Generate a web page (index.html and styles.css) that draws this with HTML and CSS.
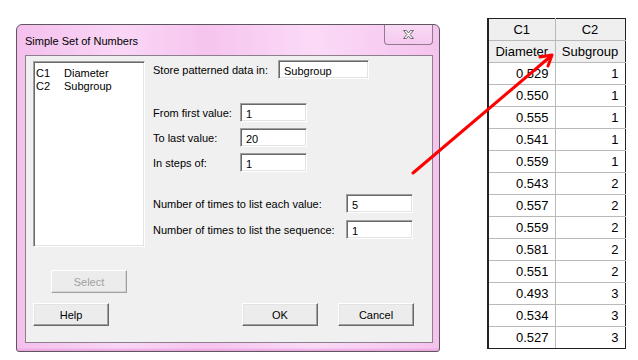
FILE: index.html
```html
<!DOCTYPE html>
<html lang="en">

<head>
    <meta charset="UTF-8">
    <meta name="viewport" content="width=device-width, initial-scale=1.0">
    <title>Simple Set of Numbers</title>
    <link rel="stylesheet" href="styles.css">
</head>

<body>
    <div class="page">
        <div class="dialog">
            <div class="titlebar">
                <span class="title">Simple Set of Numbers</span>
                <div class="close">
                    <svg width="13" height="11" viewBox="0 0 13 11">
                        <path d="M1.5 1.5h3l2 2.5 2-2.5h3l-3.4 4 3.4 4h-3l-2-2.5-2 2.5h-3l3.4-4z"
                            fill="#f4f4f4" stroke="#6d6d6d" stroke-width="1" stroke-linejoin="round" />
                    </svg>
                </div>
            </div>

            <div class="client">
                <div class="top">
                    <div class="listbox">
                        <div class="item"><span class="colname">C1</span>Diameter</div>
                        <div class="item"><span class="colname">C2</span>Subgroup</div>
                    </div>

                    <div class="fields">
                        <div class="row first">
                            <label class="lbl lbl-store" for="store">Store patterned data in:</label>
                            <input class="box box-wide" type="text" id="store" value="Subgroup">
                        </div>
                        <div class="row gap-big">
                            <label class="lbl lbl-short" for="from">From first value:</label>
                            <input class="box" type="text" id="from" value="1">
                        </div>
                        <div class="row gap-small">
                            <label class="lbl lbl-short" for="to">To last value:</label>
                            <input class="box" type="text" id="to" value="20">
                        </div>
                        <div class="row gap-small">
                            <label class="lbl lbl-short" for="steps">In steps of:</label>
                            <input class="box" type="text" id="steps" value="1">
                        </div>
                        <div class="row gap-mid">
                            <label class="lbl lbl-long" for="each">Number of times to list each value:</label>
                            <input class="box" type="text" id="each" value="5">
                        </div>
                        <div class="row gap-seq">
                            <label class="lbl lbl-long" for="seq">Number of times to list the sequence:</label>
                            <input class="box" type="text" id="seq" value="1">
                        </div>
                    </div>
                </div>

                <div class="select-row">
                    <button class="btn" disabled>Select</button>
                </div>

                <div class="button-row">
                    <button class="btn">Help</button>
                    <span class="spacer"></span>
                    <button class="btn">OK</button>
                    <button class="btn">Cancel</button>
                </div>
            </div>
        </div>

        <table class="sheet">
            <colgroup>
                <col class="col-c1">
                <col class="col-c2">
            </colgroup>
            <tr class="head"><td>C1</td><td>C2</td></tr>
            <tr class="head"><td>Diameter</td><td>Subgroup</td></tr>
            <tr><td>0.529</td><td>1</td></tr>
            <tr><td>0.550</td><td>1</td></tr>
            <tr><td>0.555</td><td>1</td></tr>
            <tr><td>0.541</td><td>1</td></tr>
            <tr><td>0.559</td><td>1</td></tr>
            <tr><td>0.543</td><td>2</td></tr>
            <tr><td>0.557</td><td>2</td></tr>
            <tr><td>0.559</td><td>2</td></tr>
            <tr><td>0.581</td><td>2</td></tr>
            <tr><td>0.551</td><td>2</td></tr>
            <tr><td>0.493</td><td>3</td></tr>
            <tr><td>0.534</td><td>3</td></tr>
            <tr><td>0.527</td><td>3</td></tr>
        </table>

        <svg class="arrow" width="638" height="360" viewBox="0 0 638 360">
            <line x1="413" y1="173" x2="551" y2="56" stroke="#ff0000" stroke-width="3" stroke-linecap="round" />
            <polyline points="540,57 552,55 548,66" fill="none" stroke="#ff0000" stroke-width="3"
                stroke-linecap="round" stroke-linejoin="round" />
        </svg>
    </div>
</body>

</html>
```

FILE: styles.css
```css
body {
    margin: 0;
    background-color: #fff;
    font-family: "Liberation Sans", Arial, sans-serif;
    color: #000;
}

.page {
    position: relative;
    display: flex;
    align-items: flex-start;
    width: 638px;
    height: 360px;
}

/* dialog window */

.dialog {
    box-sizing: border-box;
    width: 424px;
    height: 328px;
    margin: 24px 0 0 16px;
    padding: 0 6px 7px 8px;
    border: 1px solid #5f5660;
    border-radius: 6px 6px 3px 3px;
    background: linear-gradient(to right, #f4c0ed, #fad6f6 25%, #f6c4ef 45%, #fbdaf7 70%, #f5c3ee);
    box-shadow: inset 0 -3px 2px -1px #eba6e0;
}

.titlebar {
    display: flex;
    align-items: center;
    justify-content: space-between;
    height: 30px;
}

.title {
    font-size: 11px;
    padding-top: 2px;
}

.close {
    display: flex;
    align-items: center;
    justify-content: center;
    align-self: flex-start;
    width: 47px;
    height: 19px;
    border: 1px solid #917b8d;
    border-top: none;
    border-radius: 0 0 4px 4px;
    background: linear-gradient(#f9daf5, #f6c9f0);
}

.client {
    box-sizing: border-box;
    height: 288px;
    padding: 5px 18px 0 7px;
    border: 1px solid #8d7f8b;
    background-color: #f0f0f0;
    font-size: 11px;
}

.top {
    display: flex;
    gap: 8px;
}

.listbox {
    box-sizing: border-box;
    width: 112px;
    height: 186px;
    padding: 5px 2px;
    border: 1px solid;
    border-color: #a0a0a0 #fff #fff #a0a0a0;
    box-shadow: inset 1px 1px 0 #696969, inset -1px -1px 0 #e3e3e3;
    background-color: #fff;
    font-size: 11px;
    line-height: 13px;
}

.colname {
    display: inline-block;
    width: 28px;
}

.fields {
    margin-top: -1px;
}

.row {
    display: flex;
    align-items: center;
    height: 19px;
}

.gap-big {
    margin-top: 24px;
}

.gap-small {
    margin-top: 6px;
}

.gap-mid {
    margin-top: 22px;
}

.gap-seq {
    margin-top: 7px;
}

.lbl-store {
    width: 125px;
}

.lbl-short {
    width: 87px;
}

.lbl-long {
    width: 193px;
}

.box {
    box-sizing: border-box;
    width: 67px;
    height: 19px;
    margin: 0;
    padding: 2px 0 0 5px;
    border: 1px solid;
    border-color: #a0a0a0 #fff #fff #a0a0a0;
    box-shadow: inset 1px 1px 0 #696969, inset -1px -1px 0 #e3e3e3;
    background-color: #fff;
    font-family: "Liberation Sans", Arial, sans-serif;
    font-size: 11px;
    color: #000;
    outline: none;
}

.box-wide {
    width: 91px;
}

/* buttons */

.btn {
    box-sizing: border-box;
    width: 76px;
    height: 23px;
    padding: 0;
    border: 1px solid;
    border-color: #fff #696969 #696969 #fff;
    box-shadow: inset -1px -1px 0 #a0a0a0, inset 1px 1px 0 #e3e3e3;
    background-color: #ececec;
    font-family: "Liberation Sans", Arial, sans-serif;
    font-size: 11px;
    color: #000;
}

.btn:disabled {
    color: #a0a0a0;
    border-color: #fff #a0a0a0 #a0a0a0 #fff;
    box-shadow: inset -1px -1px 0 #d6d6d6;
}

.select-row {
    margin: 23px 0 0 18px;
}

.button-row {
    display: flex;
    gap: 20px;
    margin-top: 10px;
}

.spacer {
    flex: 1;
}

/* worksheet */

.sheet {
    table-layout: fixed;
    width: 137px;
    margin: 18px 0 0 47px;
    border-collapse: collapse;
    border: 1px solid #222;
    border-left-width: 2px;
    font-size: 13px;
}

.col-c1 {
    width: 67px;
}

.col-c2 {
    width: 70px;
}

.sheet td {
    height: 21px;
    padding: 0 6px;
    border: 1px solid #b9b9b9;
    text-align: right;
    line-height: 21px;
    overflow: hidden;
    white-space: nowrap;
}

.sheet td:last-child {
    border-right-color: #222;
}

.sheet tr:first-child td {
    border-top-color: #222;
}

.sheet tr:last-child td {
    border-bottom-color: #222;
}

.sheet .head td {
    padding: 0 1px;
    background-color: #efefef;
    text-align: center;
}

.arrow {
    position: absolute;
    top: 0;
    left: 0;
    pointer-events: none;
}
```
